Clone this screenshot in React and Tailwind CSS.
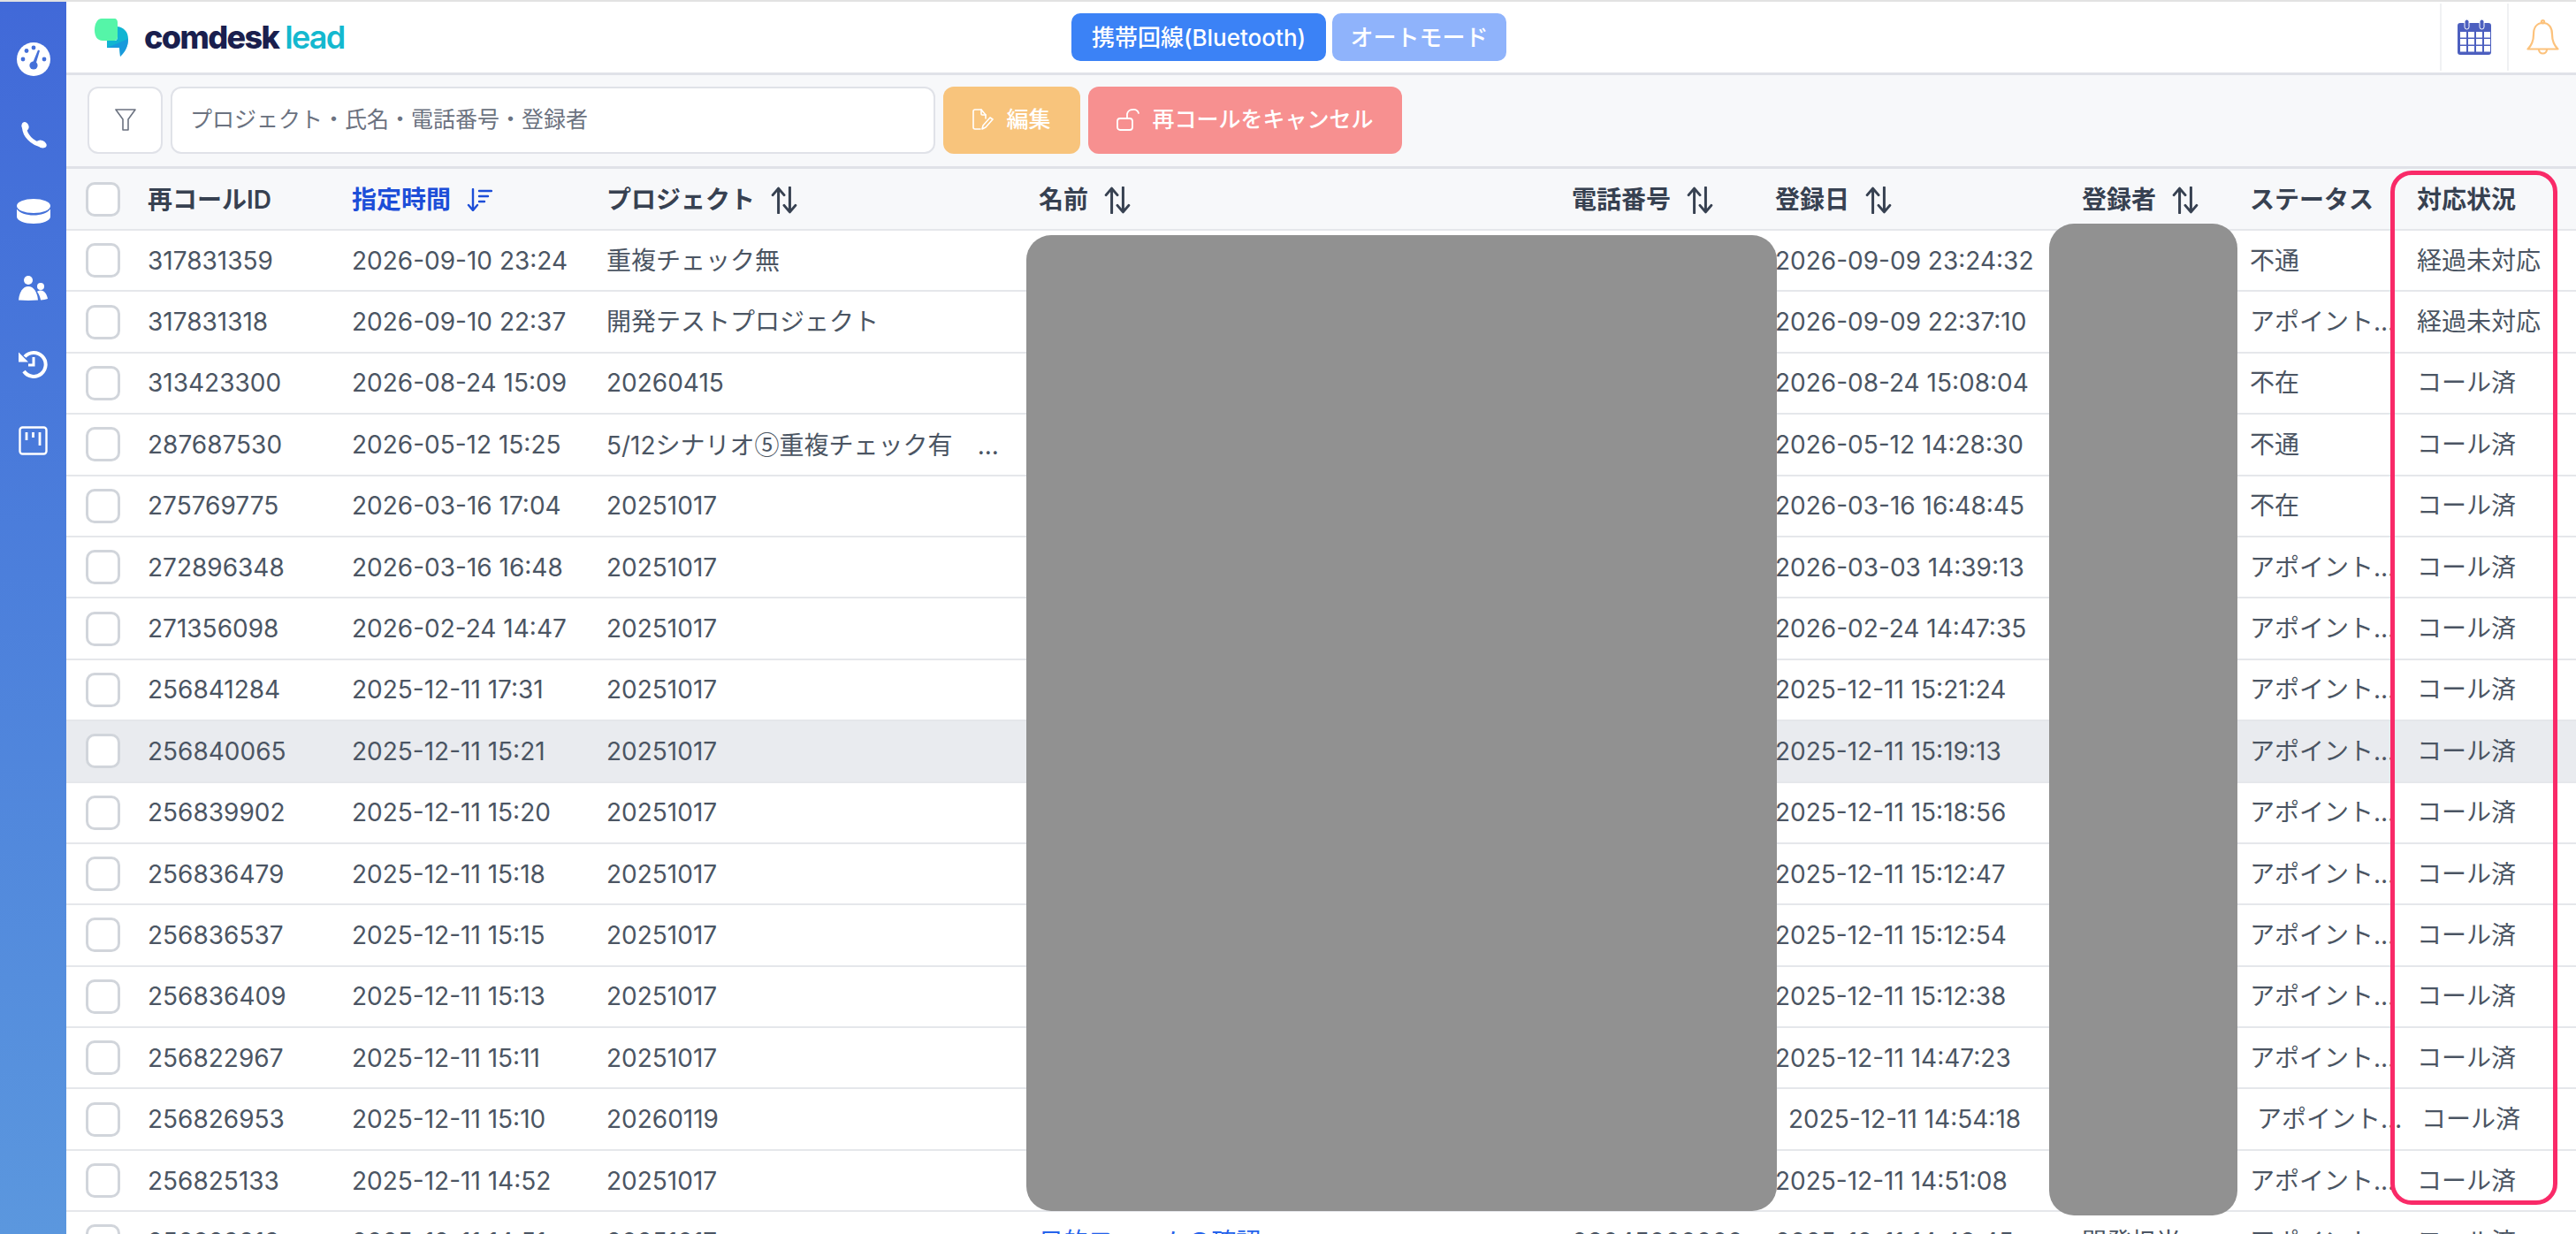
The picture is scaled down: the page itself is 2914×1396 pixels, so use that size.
const gridCols = "grid grid-cols-[92px_231px_288px_489px_603px_230px_347px_190px_189px_180px] items-center";

const rows = [
  { id: "317831359", time: "2026-09-10 23:24", project: "重複チェック無", date: "2026-09-09 23:24:32", status: "不通", state: "経過未対応" },
  { id: "317831318", time: "2026-09-10 22:37", project: "開発テストプロジェクト", date: "2026-09-09 22:37:10", status: "アポイント確定", state: "経過未対応" },
  { id: "313423300", time: "2026-08-24 15:09", project: "20260415", date: "2026-08-24 15:08:04", status: "不在", state: "コール済" },
  {
    id: "287687530",
    time: "2026-05-12 15:25",
    project: (
      <>
        5/12シナリオ<span className="font-['Noto_Sans_CJK_JP']">⑤</span>重複チェック有{"\u3000"}...
      </>
    ),
    date: "2026-05-12 14:28:30",
    status: "不通",
    state: "コール済",
  },
  { id: "275769775", time: "2026-03-16 17:04", project: "20251017", date: "2026-03-16 16:48:45", status: "不在", state: "コール済" },
  { id: "272896348", time: "2026-03-16 16:48", project: "20251017", date: "2026-03-03 14:39:13", status: "アポイント確定", state: "コール済" },
  { id: "271356098", time: "2026-02-24 14:47", project: "20251017", date: "2026-02-24 14:47:35", status: "アポイント確定", state: "コール済" },
  { id: "256841284", time: "2025-12-11 17:31", project: "20251017", date: "2025-12-11 15:21:24", status: "アポイント確定", state: "コール済" },
  { id: "256840065", time: "2025-12-11 15:21", project: "20251017", date: "2025-12-11 15:19:13", status: "アポイント確定", state: "コール済", hover: true },
  { id: "256839902", time: "2025-12-11 15:20", project: "20251017", date: "2025-12-11 15:18:56", status: "アポイント確定", state: "コール済" },
  { id: "256836479", time: "2025-12-11 15:18", project: "20251017", date: "2025-12-11 15:12:47", status: "アポイント確定", state: "コール済" },
  { id: "256836537", time: "2025-12-11 15:15", project: "20251017", date: "2025-12-11 15:12:54", status: "アポイント確定", state: "コール済" },
  { id: "256836409", time: "2025-12-11 15:13", project: "20251017", date: "2025-12-11 15:12:38", status: "アポイント確定", state: "コール済" },
  { id: "256822967", time: "2025-12-11 15:11", project: "20251017", date: "2025-12-11 14:47:23", status: "アポイント確定", state: "コール済" },
  { id: "256826953", time: "2025-12-11 15:10", project: "20260119", date: "2025-12-11 14:54:18", status: "アポイント確定", state: "コール済", shifted: true },
  { id: "256825133", time: "2025-12-11 14:52", project: "20251017", date: "2025-12-11 14:51:08", status: "アポイント確定", state: "コール済" },
  { id: "256823913", time: "2025-12-11 14:51", project: "20251017", name: "目的フォームの確認", phone: "08045000000", date: "2025-12-11 14:48:45", owner: "開発担当", status: "アポイント確定", state: "コール済" },
];

function GaugeIcon() {
  return (
    <svg viewBox="0 0 38 38" className="w-[38px] h-[38px]">
      <circle cx="19" cy="19" r="19" fill="#fff" />
      <g fill="#4470d9">
        <circle cx="7" cy="19" r="2.4" />
        <circle cx="11" cy="9.5" r="2.4" />
        <circle cx="19" cy="6" r="2.4" />
        <circle cx="31" cy="19" r="2.4" />
        <circle cx="19" cy="26" r="4.6" />
        <path d="M17.2 25 24 8.5l2 .8L21 26z" />
      </g>
    </svg>
  );
}

function DatabaseIcon() {
  return (
    <svg viewBox="0 0 38 28" className="w-[38px] h-[28px]">
      <ellipse cx="19" cy="8" rx="19" ry="8" fill="#fff" />
      <path d="M0 11.5C3 16 11 18.5 19 18.5S35 16 38 11.5V20c0 4.5-8.5 8-19 8S0 24.500 0 20z" fill="#fff" />
    </svg>
  );
}

function UsersIcon() {
  return (
    <svg viewBox="0 0 33 28" className="w-[33px] h-[28px]" fill="#fff">
      <circle cx="11" cy="5" r="5" />
      <path d="M0 27.500C1 18 5 12 11 12s10 6 11 15.500c-7 .5-15 .5-22 0z" />
      <circle cx="25" cy="12" r="4" />
      <path d="M21 18c1-1 2.500-1.500 4-1.500 4 0 7 4 8 9.500-2.500.8-5 1.300-8 1.500-.5-3.500-2-7-4-9.500z" />
    </svg>
  );
}

function HistoryIcon() {
  return (
    <svg viewBox="0 0 33 33" className="w-[33px] h-[33px]">
      <path d="M7 8.500A13.500 13.500 0 1 1 6 25" fill="none" stroke="#fff" strokeWidth="4" />
      <path d="M0 3.500 11 14.500H0z" fill="#fff" />
      <path d="M17 9v9h-6" fill="none" stroke="#fff" strokeWidth="3" />
    </svg>
  );
}

function BoardIcon() {
  return (
    <svg viewBox="0 0 33 33" className="w-[33px] h-[33px]" fill="none" stroke="#fff" strokeWidth="2.400">
      <rect x="1.500" y="1.500" width="30" height="30" rx="3" />
      <path d="M9 7v9M16.500 7v6M24 7v15" strokeWidth="2.800" />
    </svg>
  );
}

function PhoneIcon() {
  return (
    <svg viewBox="0 0 30 30" className="w-[30px] h-[30px]" fill="#fff">
      <path d="M4.500 6C5 15 13 24 24 26" fill="none" stroke="#fff" strokeWidth="5" />
      <ellipse cx="5.500" cy="5" rx="4" ry="5" transform="rotate(-20 5.500 5)" />
      <ellipse cx="24" cy="25" rx="6" ry="4" transform="rotate(25 24 25)" />
    </svg>
  );
}

function FilterIcon() {
  return (
    <svg viewBox="0 0 24 25" className="w-[24px] h-[25px]" fill="none" stroke="#6b7280" strokeWidth="1.600" strokeLinejoin="round">
      <path d="M1 1h22l-8 11v12H9V12z" />
    </svg>
  );
}

function EditIcon() {
  return (
    <svg viewBox="0 0 24 25" className="w-[24px] h-[25px]" fill="none" stroke="#fff" strokeWidth="1.600" strokeLinecap="round" strokeLinejoin="round">
      <path d="M9 23H3a2 2 0 0 1-2-2V3a2 2 0 0 1 2-2h7l5 6v4" />
      <path d="M10 1v5a1 1 0 0 0 1 1h4" />
      <path d="m11 23 1-4 8-9 3 2-8 9z" />
    </svg>
  );
}

function UnlockIcon() {
  return (
    <svg viewBox="0 0 26 25" className="w-[26px] h-[25px]" fill="none" stroke="#fff" strokeWidth="1.800" strokeLinecap="round">
      <rect x="1" y="11" width="17" height="13" rx="3" />
      <path d="M12 11V6a6 6 0 0 1 6-5 6 6 0 0 1 7 4" />
    </svg>
  );
}

function SortIcon() {
  return (
    <svg viewBox="0 0 28 29" className="w-[30px] h-[31px]" fill="none" stroke="#374151" strokeWidth="2.800" strokeLinecap="round" strokeLinejoin="round">
      <path d="M8 28V2M2 9l6-7 6 7" />
      <path d="M20 1v26M14 20l6 7 6-7" />
    </svg>
  );
}

function SortActiveIcon() {
  return (
    <svg viewBox="0 0 29 26" className="w-[29px] h-[26px]" fill="none" stroke="#1d4ed8" strokeWidth="2.400" strokeLinecap="round" strokeLinejoin="round">
      <path d="M7 1v24M2 19l5 6 5-6" />
      <path d="M14 3h14M14 9h10M14 15h6" />
    </svg>
  );
}

function CalendarIcon() {
  return (
    <svg viewBox="0 0 38 40" className="w-[38px] h-[40px]">
      <rect x="0" y="4" width="38" height="36" rx="3" fill="#4c5fbf" />
      <rect x="8" y="0" width="5" height="11" rx="2.500" fill="#4c5fbf" stroke="#fff" strokeWidth="1" />
      <rect x="25" y="0" width="5" height="11" rx="2.500" fill="#4c5fbf" stroke="#fff" strokeWidth="1" />
      <g fill="#fff">
        {[14, 22, 30].map((y) =>
          [3, 12, 21, 30].map((x) => <rect key={`${x}-${y}`} x={x} y={y} width="7" height="6.500" />)
        )}
      </g>
    </svg>
  );
}

function BellIcon() {
  return (
    <svg viewBox="0 0 37 40" className="w-[37px] h-[40px]" fill="none" stroke="#fcc27c" strokeWidth="2.200" strokeLinejoin="round">
      <path d="M18.500 4C11 4 8 10 8 17c0 8-2 12-6.500 16.500h34C31 29 29 25 29 17c0-7-3-13-10.500-13z" />
      <circle cx="18.500" cy="2.800" r="1.600" />
      <path d="M14 34a4.500 4.500 0 0 0 9 0" />
    </svg>
  );
}

function Logo() {
  return (
    <svg viewBox="0 0 38 43" className="w-[38px] h-[43px]">
      <path d="M8 0h14c3 0 4 2 4 5v15c0 3-1 5-5 5H9C3 25 0 20 0 13 0 6 3 0 8 0z" fill="#55f5a8" />
      <path d="M26 9c7 1 12 6 12 14 0 8-3 14-9 20l-1-10H14V25h9c2 0 3-2 3-4z" fill="#10b5d2" />
      <path d="M38 23c0 8-3 14-9 20l-1-10H14z" fill="#1d8fe0" opacity="0.7" />
    </svg>
  );
}

function Checkbox() {
  return <div className="w-[39px] h-[39px] rounded-[10px] border-[3px] border-[#d1d5db] bg-white" />;
}

function HeaderCell({ children, active, sortable }) {
  return (
    <div className={`flex items-center gap-[18px] pt-[2px] font-semibold ${active ? "text-[#1d4ed8]" : "text-[#374151]"}`}>
      {children}
      {sortable && <SortIcon />}
      {active && <SortActiveIcon />}
    </div>
  );
}

function TableRow({ row }) {
  return (
    <div className={`${gridCols} h-[69.4px] border-b-2 border-[#e5e7eb] text-[#4b5563] ${row.hover ? "bg-[#e9ebef]" : "bg-white"}`}>
      <div className="pl-[22px]"><Checkbox /></div>
      <div>{row.id}</div>
      <div>{row.time}</div>
      <div className="whitespace-nowrap">{row.project}</div>
      <div className="text-[#2563eb]">{row.name}</div>
      <div>{row.phone}</div>
      <div className={row.shifted ? "pl-[15px]" : ""}>{row.date}</div>
      <div>{row.owner}</div>
      <div className={`truncate ${row.shifted ? "pl-[8px]" : "pr-[24px]"}`}>{row.status}</div>
      <div className={row.shifted ? "pl-[5px]" : ""}>{row.state}</div>
    </div>
  );
}

export default function App() {
  const navIcons = [GaugeIcon, PhoneIcon, DatabaseIcon, UsersIcon, HistoryIcon, BoardIcon];

  return (
    <div className="relative h-screen overflow-hidden bg-white flex flex-col font-[Inter,'Noto_Sans_CJK_JP',sans-serif] text-[28px]">
      <div className="h-[2px] shrink-0 bg-[#e2e2e2]" />
      <div className="flex flex-1 min-h-0">
        {/* Sidebar */}
        <aside className="w-[75px] shrink-0 flex flex-col items-center pt-[22px] bg-gradient-to-b from-[#4169d8] to-[#5b97de]">
          {navIcons.map((Icon, i) => (
            <div key={i} className="h-[86.200px] flex items-center justify-center">
              <Icon />
            </div>
          ))}
        </aside>

        <div className="flex-1 min-w-0 flex flex-col">
          {/* Header */}
          <header className="h-[83px] shrink-0 flex items-center border-b-[3px] border-[#e0e2e8] relative">
            <div className="w-[1137px] flex items-center pl-[32px]">
              <Logo />
              <span className="ml-[18px] text-[36px] font-extrabold leading-none text-[#1a1f4e] tracking-[-0.045em]">comdesk</span>
              <span className="ml-[7px] text-[36px] font-semibold leading-none text-[#14b8cf] tracking-[-0.05em]">lead</span>
            </div>
            <div className="flex items-center gap-[7px]">
              <button className="w-[288px] h-[54px] rounded-[10px] bg-[#3b82f6] text-white text-[26px] font-medium">携帯回線(Bluetooth)</button>
              <button className="w-[197px] h-[54px] rounded-[10px] bg-[#8fb3fb] text-white text-[26px] font-medium">オートモード</button>
            </div>
            <div className="ml-auto h-[76px] flex">
              <div className="w-[76px] flex items-center justify-center border-l-2 border-[#f0f1f3]"><CalendarIcon /></div>
              <div className="w-[78px] flex items-center justify-center border-l-2 border-[#f0f1f3]"><BellIcon /></div>
            </div>
          </header>

          {/* Toolbar */}
          <div className="h-[106px] shrink-0 flex items-center pl-[24px] pb-[2px] gap-[9px] bg-[#f7f8fa] border-b-[3px] border-[#e0e2e8]">
            <button className="w-[85px] h-[76px] flex items-center justify-center rounded-[12px] bg-white border-2 border-[#e0e2e8]"><FilterIcon /></button>
            <div className="w-[865px] h-[76px] flex items-center pl-[20px] rounded-[12px] bg-white border-2 border-[#e0e2e8] text-[25px] text-[#6b7280]">プロジェクト・氏名・電話番号・登録者</div>
            <button className="w-[155px] h-[76px] flex items-center justify-center gap-[14px] rounded-[12px] bg-[#f8c47c] text-white text-[25px] font-medium"><EditIcon />編集</button>
            <button className="w-[355px] h-[76px] flex items-center justify-center gap-[14px] rounded-[12px] bg-[#f79090] text-white text-[25px] font-medium"><UnlockIcon />再コールをキャンセル</button>
          </div>

          {/* Table */}
          <div className={`${gridCols} h-[70px] shrink-0 bg-[#f7f8fa] border-b-2 border-[#e5e7eb]`}>
            <div className="pl-[22px]"><Checkbox /></div>
            <HeaderCell>再コールID</HeaderCell>
            <HeaderCell active>指定時間</HeaderCell>
            <HeaderCell sortable>プロジェクト</HeaderCell>
            <HeaderCell sortable>名前</HeaderCell>
            <HeaderCell sortable>電話番号</HeaderCell>
            <HeaderCell sortable>登録日</HeaderCell>
            <HeaderCell sortable>登録者</HeaderCell>
            <HeaderCell>ステータス</HeaderCell>
            <HeaderCell>対応状況</HeaderCell>
          </div>
          <div className="flex-1 min-h-0 overflow-hidden">
            {rows.map((row) => (
              <TableRow key={row.id} row={row} />
            ))}
          </div>
        </div>
      </div>

      {/* Redaction blocks and highlight that lie over the table */}
      <div className="absolute left-[1161px] top-[266px] w-[849px] h-[1104px] rounded-[28px] bg-[#919191]" />
      <div className="absolute left-[2318px] top-[253px] w-[213px] h-[1122px] rounded-[28px] bg-[#919191]" />
      <div className="absolute left-[2704px] top-[193px] w-[189px] h-[1170px] rounded-[24px] border-[5px] border-[#f92a68]" />
    </div>
  );
}
